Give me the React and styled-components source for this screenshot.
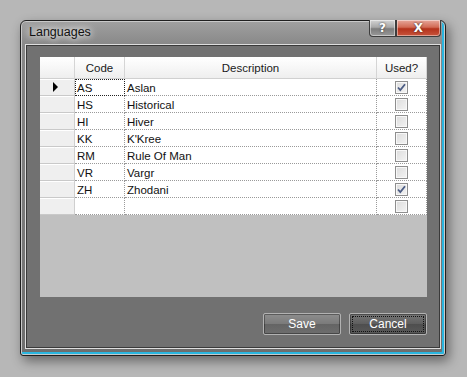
import React from 'react';
import styled, { createGlobalStyle } from 'styled-components';

const GlobalStyle = createGlobalStyle`
  html, body {
    margin: 0;
    padding: 0;
    background: #b7b7b7;
  }
  body {
    padding: 20px;
    font-family: "Liberation Sans", Arial, sans-serif;
  }
`

const Window = styled.div`
  width: 424px;
  height: 334px;
  border: 1px solid #1f1f1f;
  border-radius: 6px 6px 3px 3px;
  background: linear-gradient(180deg, #a0a0a0 0px, #888 24px, #6e6e6e 100%);
  box-shadow:
    inset 0 0 0 1px #c9c9c9,
    inset -2px -2px 0 1px #2ab6e0,
    3px 5px 12px rgba(0, 0, 0, 0.45);
  display: flex;
  flex-direction: column;
`

const TitleBar = styled.div`
  height: 24px;
  display: flex;
  justify-content: space-between;
  align-items: flex-start;
  padding: 0 4px 0 7px;
`

const Title = styled.span`
  font-family: "Liberation Sans", Arial, sans-serif;
  font-size: 12.5px;
  color: #111;
  margin-top: 4px;
  padding: 0 6px 0 1px;
  text-shadow: 0 0 6px #fff, 0 0 10px #fff;
`

const CaptionButtons = styled.div`
  display: flex;
  margin-top: -1px;
`

const CaptionButton = styled.div`
  height: 16px;
  width: ${p => p.$w}px;
  border: 1px solid #3d3d3d;
  border-top: none;
  box-shadow: inset 0 0 0 1px rgba(255, 255, 255, 0.45);
  display: flex;
  align-items: center;
  justify-content: center;
  color: #fff;
  font-family: "DejaVu Sans", sans-serif;
  font-weight: bold;
  font-size: 12px;
  text-shadow: 0 0 2px #222;
  background: ${p => p.$close
    ? 'linear-gradient(180deg, #e7a89c 0%, #d26a55 45%, #b4321c 55%, #c9553c 100%)'
    : 'linear-gradient(180deg, #d4d4d4 0%, #a8a8a8 45%, #7c7c7c 55%, #999 100%)'};
  border-radius: ${p => p.$close ? '0 0 4px 0' : '0 0 0 4px'};
`

const Client = styled.div`
  margin: 0 4px 6px 4px;
  height: 302px;
  border: 1px solid #dedede;
  box-shadow: inset 0 0 0 1px #3a3a3a;
  background: #717171;
  padding: 12px 13px 0 14px;
  display: flex;
  flex-direction: column;
`

const Grid = styled.div`
  width: 387px;
  height: 240px;
  background: #c0c0c0;
  font-size: 11.5px;
  color: #111;
`

const GridRow = styled.div`
  display: grid;
  grid-template-columns: 35px 50px 252px 50px;
  height: ${p => p.$h}px;
`

const HeaderCell = styled.div`
  background: linear-gradient(180deg, #ffffff 0%, #f7f7f7 50%, #eeeeee 100%);
  border-right: 1px solid #d5d5d5;
  border-bottom: 1px solid #d0d0d0;
  display: flex;
  align-items: center;
  justify-content: center;
  color: #1a1a1a;
  padding-top: 1px;
`

const RowHeader = styled.div`
  background: #efefef;
  border-right: 1px solid #cfcfcf;
  border-bottom: 1px solid #c9c9c9;
  box-shadow: inset 0 1px 0 #ffffff;
  display: flex;
  align-items: center;
  padding-left: 13px;
`

const Marker = styled.span`
  width: 0;
  height: 0;
  border-top: 5px solid transparent;
  border-bottom: 5px solid transparent;
  border-left: 5px solid #000;
`

const Cell = styled.div`
  background: #fff;
  border-right: 1px dotted #9a9a9a;
  border-bottom: 1px dotted #9a9a9a;
  display: flex;
  align-items: center;
  justify-content: ${p => p.$center ? 'center' : 'flex-start'};
  padding-left: ${p => p.$center ? 0 : 2}px;
  padding-top: 1px;
  outline: ${p => p.$focus ? '1px dotted #222' : 'none'};
  outline-offset: -1px;
`

const Box = styled.span`
  width: 11px;
  height: 11px;
  border: 1px solid #8e8e8e;
  background: linear-gradient(135deg, #dcdcdc 0%, #f4f4f4 100%);
  box-shadow: inset 0 0 0 1px #f8f8f8;
  display: flex;
  align-items: center;
  justify-content: center;
`

const ButtonBar = styled.div`
  display: flex;
  justify-content: flex-end;
  gap: 8px;
  margin-top: 16px;
`

const Button = styled.div`
  width: 76px;
  height: 20px;
  border: 1px solid #b2b2b2;
  border-radius: 2px;
  box-shadow: inset 0 0 0 1px rgba(0, 0, 0, 0.35);
  background: ${p => p.$focus
    ? 'linear-gradient(180deg, #777 0%, #5e5e5e 50%, #4e4e4e 51%, #5a5a5a 100%)'
    : 'linear-gradient(180deg, #8e8e8e 0%, #7a7a7a 50%, #646464 51%, #6e6e6e 100%)'};
  color: #fff;
  font-size: 12px;
  display: flex;
  align-items: center;
  justify-content: center;
  position: relative;
`

const FocusRect = styled.span`
  position: absolute;
  inset: 2px;
  border: 1px dotted #111;
`

const languages = [
  { code: 'AS', desc: 'Aslan', used: true },
  { code: 'HS', desc: 'Historical', used: false },
  { code: 'HI', desc: 'Hiver', used: false },
  { code: 'KK', desc: "K'Kree", used: false },
  { code: 'RM', desc: 'Rule Of Man', used: false },
  { code: 'VR', desc: 'Vargr', used: false },
  { code: 'ZH', desc: 'Zhodani', used: true },
  { code: '', desc: '', used: false },
];

const Check = ({ on }) => (
  <Box>
    {on && (
      <svg width="9" height="9" viewBox="0 0 9 9">
        <path d="M1 4.5 L3.3 7 L8 1.2" fill="none" stroke="#4b5c84" strokeWidth="1.8" />
      </svg>
    )}
  </Box>
);

const App = () => {
  return (
    <>
      <GlobalStyle />
      <Window>
        <TitleBar>
          <Title>Languages</Title>
          <CaptionButtons>
            <CaptionButton $w={25}>?</CaptionButton>
            <CaptionButton $w={43} $close>X</CaptionButton>
          </CaptionButtons>
        </TitleBar>
        <Client>
          <Grid>
            <GridRow $h={22}>
              <HeaderCell />
              <HeaderCell>Code</HeaderCell>
              <HeaderCell>Description</HeaderCell>
              <HeaderCell>Used?</HeaderCell>
            </GridRow>
            {languages.map((l, i) => (
              <GridRow $h={17} key={i}>
                <RowHeader>{i === 0 && <Marker />}</RowHeader>
                <Cell $focus={i === 0}>{l.code}</Cell>
                <Cell>{l.desc}</Cell>
                <Cell $center><Check on={l.used} /></Cell>
              </GridRow>
            ))}
          </Grid>
          <ButtonBar>
            <Button>Save</Button>
            <Button $focus>Cancel<FocusRect /></Button>
          </ButtonBar>
        </Client>
      </Window>
    </>
  );
};

export default App;
